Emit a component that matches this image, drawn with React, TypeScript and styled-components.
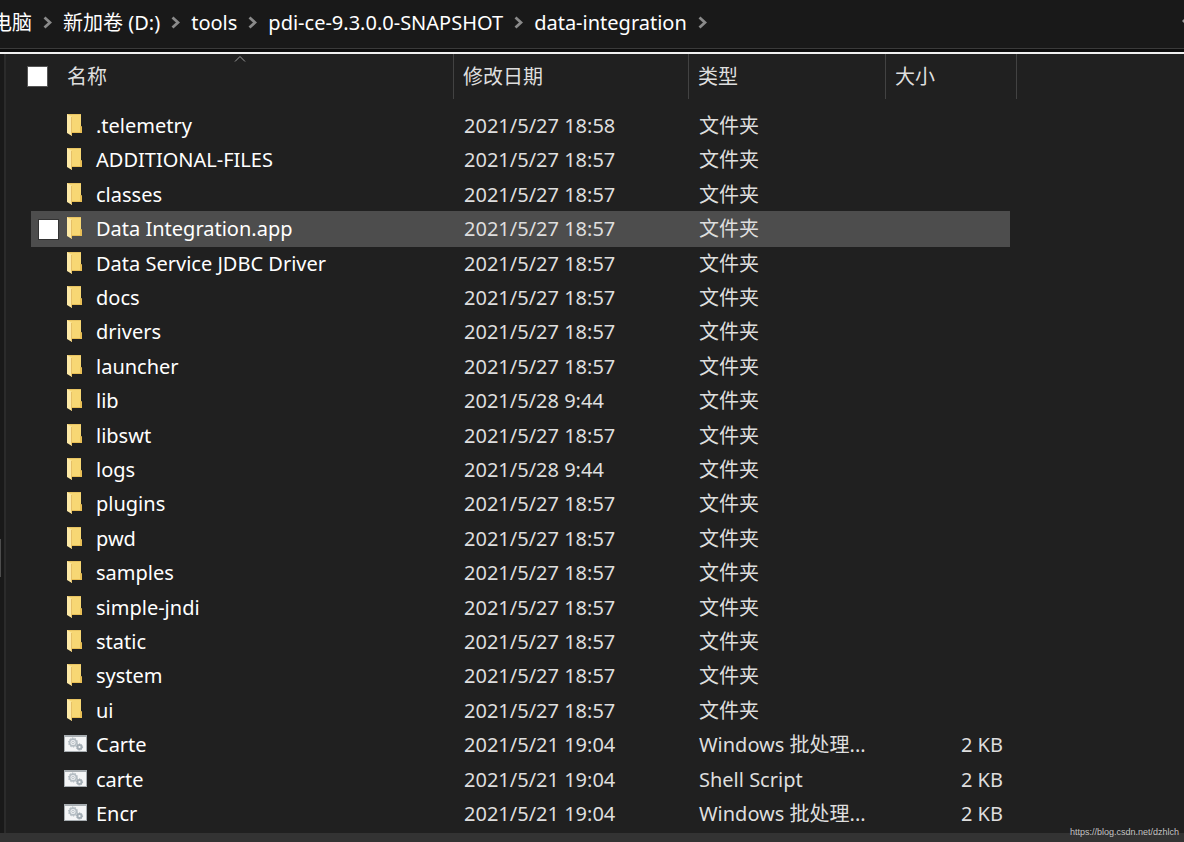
import React from "react";
import styled, { createGlobalStyle } from "styled-components";

const GlobalStyle = createGlobalStyle`
  * { box-sizing: border-box; }
  body {
    margin: 0;
    background: #202020;
    color: #fff;
    font-family: "Noto Sans", "Noto Sans CJK SC", sans-serif;
    font-size: 20px;
    line-height: 28px;
  }
`;

const Window = styled.div`
  display: flex;
  flex-direction: column;
  min-height: 100vh;
  position: relative;
  overflow: hidden;
`;

const AddressBar = styled.nav`
  display: flex;
  align-items: center;
  justify-content: space-between;
  height: 48px;
  background: #191919;
  overflow: hidden;
`;

const Crumbs = styled.ol`
  display: flex;
  align-items: center;
  gap: 11px;
  margin: 0 0 0 -8px;
  padding: 0 0 2px;
  list-style: none;
`;

const Crumb = styled.li`
  display: flex;
  align-items: center;
  gap: 11px;
  white-space: nowrap;
`;

const CrumbLink = styled.a`
  color: #fff;
  text-decoration: none;
`;

const EdgeMark = styled.svg`
  display: block;
  margin-bottom: 6px;
`;

const Divider = styled.div`
  height: 6px;
  background: #0d0d0d;
  border-top: 1px solid #3a3a3a;
  border-bottom: 2px solid #f0f0f0;
`;

const Body = styled.div`
  display: flex;
  flex: 1;
`;

const NavEdge = styled.div`
  display: flex;
  align-items: flex-start;
  width: 6px;
  background: #191919;
  border-right: 2px solid #2b2b2b;
`;

const NavThumb = styled.div`
  width: 1px;
  height: 38px;
  margin-top: 485px;
  background: #4d4d4d;
`;

const Files = styled.main`
  flex: 1;
  min-width: 0;
  overflow: hidden;
`;

const Table = styled.table`
  table-layout: fixed;
  border-collapse: separate;
  border-spacing: 0;
  width: 1011px;

  tbody::before {
    content: "";
    display: table-row;
    height: 10px;
  }
`;

const Col = styled.col<{ $w: number }>`
  width: ${(p) => p.$w}px;
`;

const Head = styled.th<{ $line?: boolean; $inset?: number }>`
  position: relative;
  height: 45px;
  padding: 0 0 0 ${(p) => p.$inset ?? 9}px;
  text-align: left;
  font-weight: 400;
  color: #dedede;
  border-right: ${(p) => (p.$line ? "1px solid #424242" : "none")};
`;

const SortArrow = styled.svg`
  position: absolute;
  top: 1px;
  right: 207px;
`;

const Row = styled.tr<{ $selected: boolean }>`
  height: 34px;
  &:nth-child(5n + 3),
  &:nth-child(5n + 5) {
    height: 35px;
  }
  td:not(:first-child):not(:last-child) {
    background: ${(p) => (p.$selected ? "#4d4d4d" : "transparent")};
    box-shadow: ${(p) => (p.$selected ? "0 1px #4d4d4d, 0 -1px #4d4d4d" : "none")};
  }
`;

const Cell = styled.td<{ $align?: "right" }>`
  padding: 0 0 0 10px;
  color: #dedede;
  white-space: nowrap;
  overflow: hidden;
  text-overflow: ellipsis;
  text-align: ${(p) => p.$align ?? "left"};
  ${(p) => p.$align && "padding-right: 7px;"}
`;

const CheckCell = styled.td`
  padding: 0 0 0 7px;
`;

const Check = styled.input`
  display: block;
  appearance: none;
  width: 21px;
  height: 21px;
  margin: 0;
  background: #fff;
  border: 1px solid #333;
`;

const HeadCheck = styled(Check)`
  margin-left: 21px;
  border-color: #555;
`;

const Name = styled.div`
  display: grid;
  grid-template-columns: 24px 1fr;
  column-gap: 8px;
  align-items: center;
  color: #fff;

  svg {
    margin-bottom: 2px;
  }
`;

const NameCell = styled(Cell)`
  padding: 0;
`;

const StatusEdge = styled.footer`
  height: 9px;
  background: #333;
`;

const Watermark = styled.small`
  position: absolute;
  right: 5px;
  bottom: 4px;
  font: 9px/12px "Liberation Sans", sans-serif;
  color: #c4c4c4;
`;

const Chevron = () => (
  <svg width="9" height="14" viewBox="0 0 9 14" aria-hidden="true">
    <path d="M1.5 1.5 7 6.5 1.5 11.5" fill="none" stroke="#8a8a8a" strokeWidth="2.8" />
  </svg>
);

const FolderIcon = () => (
  <svg width="24" height="24" viewBox="0 0 24 24" aria-hidden="true">
    <path d="M3 1H17V13L18 14V20H7Z" fill="#f7d774" />
    <path d="M3 1H17V2H3Z" fill="#e8c463" />
    <path d="M16 13H17L18 14V20H7V19H16Z" fill="#e9bf55" />
    <path d="M3 1 8 4V23L3 20Z" fill="#fde9a6" />
    <path d="M7 4H8V23L7 22Z" fill="#e6c067" />
  </svg>
);

const ScriptIcon = () => (
  <svg width="24" height="24" viewBox="0 0 24 24" aria-hidden="true">
    <rect x="0" y="3" width="23" height="17" fill="#a7adb1" />
    <rect x="1" y="5" width="21" height="14" fill="#f4f5f6" />
    <circle cx="9" cy="10.5" r="3.4" fill="none" stroke="#b4bdc3" strokeWidth="1.8" />
    <circle cx="9" cy="10.5" r="4.5" fill="none" stroke="#a9b3ba" strokeWidth="1" strokeDasharray="1.4 1.4" />
    <circle cx="9" cy="10.5" r="1.3" fill="none" stroke="#bcc4c9" />
    <circle cx="15.5" cy="15" r="2" fill="none" stroke="#a3adb4" strokeWidth="1.8" />
    <circle cx="15.5" cy="15" r="3.1" fill="none" stroke="#98a3ab" strokeWidth="1" strokeDasharray="1.2 1.1" />
  </svg>
);

type Entry = { name: string; date: string; type: string; size?: string; selected?: boolean };

const folder = (name: string, date = "2021/5/27 18:57", selected = false): Entry => ({
  name,
  date,
  type: "文件夹",
  selected,
});

const script = (name: string, type: string): Entry => ({
  name,
  date: "2021/5/21 19:04",
  type,
  size: "2 KB",
});

const entries: Entry[] = [
  folder(".telemetry", "2021/5/27 18:58"),
  folder("ADDITIONAL-FILES"),
  folder("classes"),
  folder("Data Integration.app", "2021/5/27 18:57", true),
  folder("Data Service JDBC Driver"),
  folder("docs"),
  folder("drivers"),
  folder("launcher"),
  folder("lib", "2021/5/28 9:44"),
  folder("libswt"),
  folder("logs", "2021/5/28 9:44"),
  folder("plugins"),
  folder("pwd"),
  folder("samples"),
  folder("simple-jndi"),
  folder("static"),
  folder("system"),
  folder("ui"),
  script("Carte", "Windows 批处理..."),
  script("carte", "Shell Script"),
  script("Encr", "Windows 批处理..."),
];

const path = ["电脑", "新加卷 (D:)", "tools", "pdi-ce-9.3.0.0-SNAPSHOT", "data-integration"];

export default function App() {
  return (
    <Window>
      <GlobalStyle />
      <AddressBar>
        <Crumbs>
          {path.map((part) => (
            <Crumb key={part}>
              <CrumbLink href="#">{part}</CrumbLink>
              <Chevron />
            </Crumb>
          ))}
        </Crumbs>
        <EdgeMark width="2" height="4" viewBox="0 0 2 4" aria-hidden="true">
          <path d="M2 0V4L0 2Z" fill="#9a9a9a" />
        </EdgeMark>
      </AddressBar>
      <Divider />
      <Body>
        <NavEdge>
          <NavThumb />
        </NavEdge>
        <Files>
          <Table>
            <colgroup>
              <Col $w={25} />
              <Col $w={33} />
              <Col $w={390} />
              <Col $w={235} />
              <Col $w={197} />
              <Col $w={124} />
              <Col $w={7} />
            </colgroup>
            <thead>
              <tr>
                <Head as="td" colSpan={2} $inset={0}>
                  <HeadCheck type="checkbox" aria-label="全选" />
                </Head>
                <Head $line $inset={3}>
                  名称
                  <SortArrow width="12" height="8" viewBox="0 0 12 8" aria-hidden="true">
                    <path d="M1 6.5 6 1.5 11 6.5" fill="none" stroke="#9a9a9a" />
                  </SortArrow>
                </Head>
                <Head $line>修改日期</Head>
                <Head $line>类型</Head>
                <Head $line colSpan={2}>大小</Head>
              </tr>
            </thead>
            <tbody>
              {entries.map((e) => (
                <Row key={e.name} $selected={!!e.selected}>
                  <td />
                  <CheckCell>
                    {e.selected && <Check type="checkbox" aria-label={e.name} />}
                  </CheckCell>
                  <NameCell>
                    <Name>
                      {e.size ? <ScriptIcon /> : <FolderIcon />}
                      {e.name}
                    </Name>
                  </NameCell>
                  <Cell>{e.date}</Cell>
                  <Cell>{e.type}</Cell>
                  <Cell $align="right">{e.size}</Cell>
                  <td />
                </Row>
              ))}
            </tbody>
          </Table>
        </Files>
      </Body>
      <StatusEdge />
      <Watermark>https://blog.csdn.net/dzhlch</Watermark>
    </Window>
  );
}
